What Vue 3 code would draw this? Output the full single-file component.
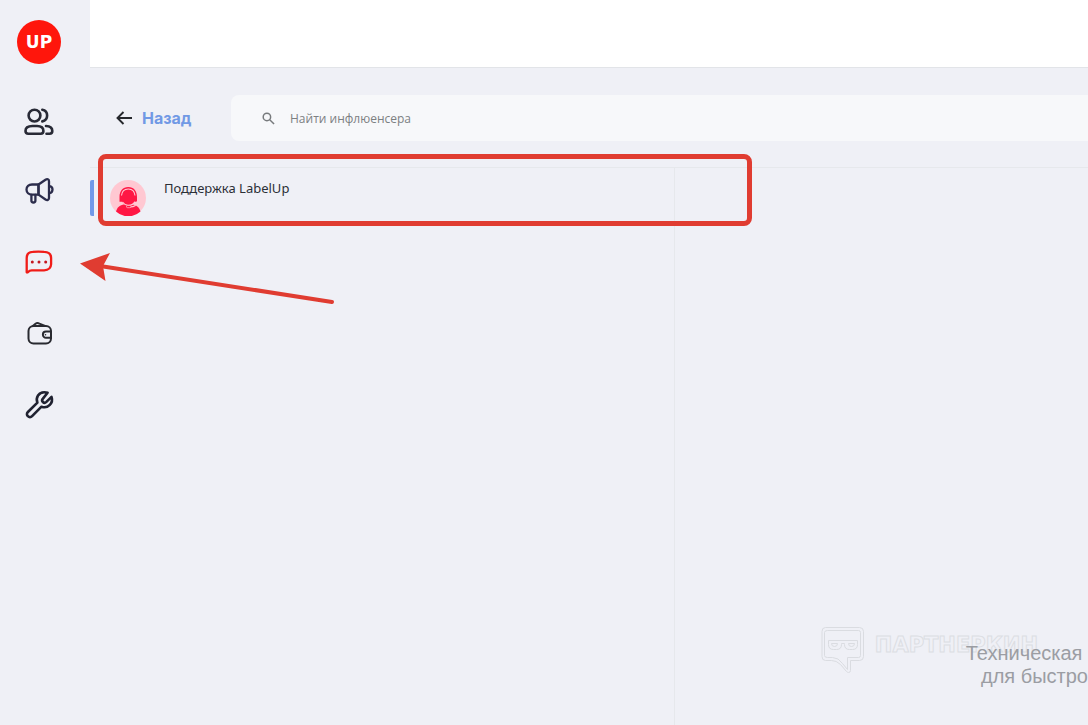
<script setup>
import { ref } from 'vue'

const query = ref('')
const chats = [{ id: 1, name: 'Поддержка LabelUp' }]
</script>

<template>
  <div class="app">
    <aside class="sidebar">
      <a href="#" class="logo" aria-label="LabelUp">UP</a>
      <nav class="menu">
        <a href="#" aria-label="Инфлюенсеры">
          <svg viewBox="0 0 32 32" fill="none" stroke="#282a36" stroke-width="2.6" stroke-linecap="round">
            <circle cx="11.500" cy="11.600" r="5.900" />
            <path d="M19.300 5.800a5.900 5.900 0 0 1 0 11.600" />
            <path d="M9.500 22h4.500c4 0 6.400 2 6.400 5 0 1.800-1 2.700-2.700 2.700H5.200c-1.700 0-2.700-.9-2.700-2.700C2.500 24 5 22 9.500 22z" />
            <path d="M23 22c4 .1 6.300 2 6.300 5 0 1.800-1 2.700-2.700 2.700H23.500" />
          </svg>
        </a>
        <a href="#" aria-label="Кампании">
          <svg viewBox="0 0 32 32" fill="none" stroke="#2c2d4c" stroke-width="2.300" stroke-linejoin="round" stroke-linecap="round">
            <path d="M15.500 9.500H9c-3.300 0-5.500 2-5.500 5s2.200 5.100 5.500 5.100h6.500z" />
            <path d="M15.500 9.500l7-4.800c1.700-1.100 3.500-.5 3.500 1.500v16.800c0 2-1.800 2.600-3.500 1.500l-7-4.900z" />
            <path d="M26.600 11.100c1.800.2 2.900 1.600 2.900 3.500s-1.100 3.300-2.900 3.500" />
            <path d="M8.400 19.800v5.700c0 1.200.8 2 2 2s2-.8 2-2v-5.700" />
          </svg>
        </a>
        <a href="#" aria-label="Сообщения" aria-current="page">
          <svg viewBox="0 0 32 32" fill="none" stroke="#f01c18" stroke-width="2.300" stroke-linejoin="round">
            <path d="M3.700 26.300V12c0-4.300 1.700-6 6-6.200 3.800-.3 7.600-.3 11.400 0 5 .2 7 1.900 7 6.200v6.300c-.2 4.200-2.200 5.900-7 6.100H8.800c-1.800.1-2.600.4-3.400 1.400-.7.800-1.700.9-1.700.5z" />
            <g fill="#c4161f" stroke="none">
              <circle cx="9.300" cy="16" r="1.500" />
              <circle cx="16" cy="16" r="1.500" />
              <circle cx="22.700" cy="16" r="1.500" />
            </g>
          </svg>
        </a>
        <a href="#" aria-label="Кошелёк">
          <svg viewBox="0 0 32 32" fill="none" stroke="#292a30" stroke-width="2" stroke-linejoin="round">
            <rect x="5.500" y="9" width="22.500" height="17.600" rx="5" />
            <path d="M9.500 9.200l3-2.500c1.300-1 2.500-1 3.900-.1L22 9" />
            <path d="M28 14.600h-5a3.100 3.100 0 0 0 0 6.200H28z" />
            <circle cx="22.500" cy="17.700" r=".8" fill="#292a30" stroke="none" />
          </svg>
        </a>
        <a href="#" aria-label="Настройки">
          <svg viewBox="0 0 32 32" fill="none" stroke="#202231" stroke-width="2.600" stroke-linejoin="round">
            <path d="M24.600 4.800c-3.700-1.400-7.600-.3-9.600 2.700-1.500 2.300-1.500 4.800-.6 7.100L4.900 24c-1.300 1.300-1.300 3 0 4.200 1.200 1.200 2.900 1.200 4.200-.1l9.400-9.400c3 1.100 6.200.4 8.300-1.800 2.200-2.200 2.700-5.100 1.700-8l-5.100 5c-1.200 1.100-2.500 1.100-3.500.1s-1-2.300 0-3.400z" />
          </svg>
        </a>
      </nav>
    </aside>

    <div class="page">
      <header class="header"></header>
      <div class="toolbar">
        <button type="button" class="back">
          <svg viewBox="0 0 16 14" fill="none" stroke="#26282d" stroke-width="1.900">
            <path d="M16 7H2M7.500 1L1.500 7l6 6" />
          </svg>
          Назад
        </button>
        <label class="search">
          <svg viewBox="0 0 14 14" fill="none" stroke="#777a7c" stroke-width="1.600">
            <circle cx="5.300" cy="5.300" r="4" />
            <path d="M8.300 8.300l4.700 4.700" />
          </svg>
          <input v-model="query" type="text" placeholder="Найти инфлюенсера" aria-label="Найти инфлюенсера" />
        </label>
      </div>

      <main class="content">
        <section class="chats">
          <button v-for="chat in chats" :key="chat.id" type="button" class="chat">
            <svg class="avatar" viewBox="0 0 36 36">
              <circle cx="18" cy="18" r="18" fill="#ffc8d2" />
              <path d="M6 31.500c1.200-4.500 4.800-6.900 8.900-7.300h6.600c4 .4 7.800 2.800 9 7.300A18 18 0 0 1 6 31.500z" fill="#ff1744" />
              <path d="M9.500 17c0-6 3.300-10 8.800-10S27 11 27 17v4.700h-2.500c-1.200 2.200-3.300 3.700-6.200 3.700s-5-1.500-6.200-3.700H9.500z" fill="#ff1744" />
              <path d="M11.500 15.500c.4-4 3-6.500 6.800-6.500s6.300 2.500 6.700 6.500M12.500 22c1.500 2.200 3.300 3.200 5.500 3.200 3.500 0 6-1.200 6.800-3.500M26.700 21.600c-.2 3.700-2.600 5.400-6.500 5.400" fill="none" stroke="#ffc8d2" stroke-width="1.100" />
              <rect x="16.500" y="25.500" width="4.500" height="2.200" rx="1.100" fill="#ff1744" stroke="#ffc8d2" stroke-width=".7" />
            </svg>
            <span class="name">{{ chat.name }}</span>
          </button>
        </section>
        <section class="dialog"></section>
        <div class="frame"></div>
        <svg class="arrow" viewBox="0 0 256 54">
          <path d="M20 14L252 50" fill="none" stroke="#e03c31" stroke-width="4" stroke-linecap="round" />
          <path d="M0 11.500L30 1l-7 13 2.500 15z" fill="#e03c31" />
        </svg>
      </main>
    </div>

    <div class="watermark">
      <svg viewBox="0 0 44 48" fill="none" stroke="#dadce1">
        <path d="M4.500 1.500h34q4 0 4 4v25q0 4-4 4H29.500v10q0 2-2 2-1 0-2-1l-6-7q-4-4-9-4h-6q-3.500 0-3.500-4v-25q0-4 3.500-4z" />
        <path d="M6.500 4.500h31q2 0 2 2v23q0 2-2 2h-11v12l-5-6q-4-6-10-6h-5q-3 0-3-2v-23q0-2 3-2z" />
        <path d="M7.500 14.500h29v4q0 5-5 5h-3q-5 0-5-5v-1h-3v1q0 5-5 5h-3q-5 0-5-5z" />
        <path d="M10.500 17.500h6q0 3-3 3t-3-3zM27.500 17.500h6q0 3-3 3t-3-3z" />
      </svg>
      <span>ПАРТНЕРКИН</span>
    </div>
    <p class="notice">Техническая&nbsp;<br />для быстро</p>
  </div>
</template>

<style>
body {
  margin: 0;
  background: #eff0f6;
}
</style>

<style scoped>
.app {
  position: relative;
  display: flex;
  min-height: 100vh;
  overflow: hidden;
  background: #eff0f6;
  font-family: "Noto Sans", "Open Sans", sans-serif;
}
.sidebar {
  flex: none;
  box-sizing: border-box;
  width: 90px;
  padding: 20px 12px 0 0;
  display: flex;
  flex-direction: column;
  align-items: center;
}
.logo {
  display: grid;
  place-items: center;
  width: 44px;
  height: 44px;
  border-radius: 50%;
  background: #ff160c;
  color: #fff;
  font: bold 17px/44px "DejaVu Sans", sans-serif;
  text-decoration: none;
}
.menu {
  display: flex;
  flex-direction: column;
  gap: 39px;
  margin-top: 40px;
}
.menu a,
.menu svg {
  display: block;
  width: 32px;
  height: 32px;
}
.page {
  flex: 1;
  min-width: 0;
  display: flex;
  flex-direction: column;
}
.header {
  height: 67px;
  background: #fff;
  border-bottom: 1px solid #e2e4e8;
}
.toolbar {
  display: flex;
  padding: 27px 0 26px 26px;
  border-bottom: 1px solid #e6e8ec;
}
.back {
  flex: none;
  display: flex;
  align-items: center;
  gap: 10px;
  width: 115px;
  padding: 0;
  border: 0;
  background: none;
  color: #7199e5;
  font: bold 16px/24px Inter, "Noto Sans", sans-serif;
}
.back svg {
  width: 16px;
  height: 14px;
}
.search {
  flex: 1;
  display: flex;
  align-items: center;
  gap: 15px;
  height: 46px;
  padding-left: 31px;
  border-radius: 8px 0 0 8px;
  background: #f7f8fa;
}
.search svg {
  flex: none;
  width: 13px;
  height: 13px;
}
.search input {
  flex: 1;
  min-width: 0;
  padding: 2px 0 0;
  border: 0;
  outline: 0;
  background: none;
  color: #333;
  font: 12px/22px "Open Sans", "Noto Sans", sans-serif;
}
.search input::placeholder {
  color: #7c8082;
  opacity: 1;
}
.content {
  position: relative;
  flex: 1;
  display: grid;
  grid-template-columns: 585fr 413fr;
}
.chats {
  padding-top: 12px;
  border-right: 1px solid #e6e8ec;
}
.chat {
  display: flex;
  align-items: flex-start;
  gap: 18px;
  width: 100%;
  padding: 0 0 0 16px;
  border: 0;
  border-left: 4px solid #7199e8;
  border-radius: 2px;
  background: none;
  text-align: left;
}
.avatar {
  width: 36px;
  height: 36px;
}
.name {
  color: #2b2f36;
  font: 13px/16px "Noto Sans", sans-serif;
}
.frame {
  position: absolute;
  left: 8px;
  top: -14px;
  box-sizing: border-box;
  width: 654px;
  height: 72px;
  border: 5px solid #e03c31;
  border-radius: 8px;
  pointer-events: none;
}
.arrow {
  position: absolute;
  left: -10px;
  top: 84px;
  width: 256px;
  height: 54px;
  pointer-events: none;
}
.watermark {
  position: absolute;
  right: 50px;
  bottom: 51px;
  display: flex;
  gap: 10px;
  pointer-events: none;
}
.watermark svg {
  width: 44px;
  height: 48px;
}
.watermark span {
  color: transparent;
  -webkit-text-stroke: 1px #dcdee3;
  font: bold 21px/38px "DejaVu Sans", sans-serif;
}
.notice {
  position: absolute;
  right: 0;
  bottom: 37px;
  margin: 0;
  color: #9b9da3;
  font: 20px/23px "Liberation Sans", Arial, sans-serif;
  text-align: right;
}
</style>
